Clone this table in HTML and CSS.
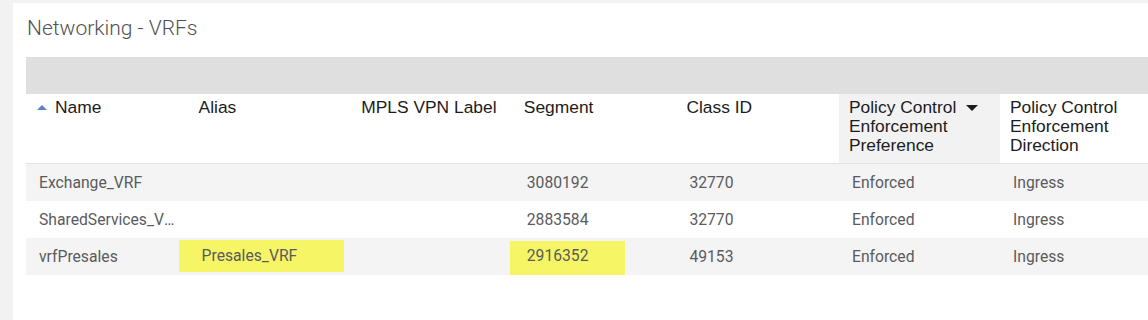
FILE: index.html
```html
<!DOCTYPE html>
<html>
<head>
<meta charset="utf-8">
<link rel="stylesheet" href="styles.css">
</head>
<body>
<div class="panel">
  <h1 class="title">Networking - VRFs</h1>
  <div class="toolbar"></div>
  <table class="grid">
    <colgroup>
      <col class="c"><col class="c"><col class="c"><col class="c"><col class="c"><col class="c-sorted"><col class="c">
    </colgroup>
    <thead>
      <tr>
        <th><span class="sort-up"></span>Name</th>
        <th>Alias</th>
        <th>MPLS VPN Label</th>
        <th>Segment</th>
        <th>Class ID</th>
        <th class="sorted">Policy Control<span class="sort-down"></span> Enforcement Preference</th>
        <th>Policy Control Enforcement Direction</th>
      </tr>
    </thead>
    <tbody>
      <tr class="odd">
        <td>Exchange_VRF</td>
        <td></td>
        <td></td>
        <td>3080192</td>
        <td>32770</td>
        <td>Enforced</td>
        <td>Ingress</td>
      </tr>
      <tr>
        <td>SharedServices_VRF</td>
        <td></td>
        <td></td>
        <td>2883584</td>
        <td>32770</td>
        <td>Enforced</td>
        <td>Ingress</td>
      </tr>
      <tr class="odd">
        <td>vrfPresales</td>
        <td><span class="mark mark-alias">Presales_VRF</span></td>
        <td></td>
        <td><span class="mark mark-seg">2916352</span></td>
        <td>49153</td>
        <td>Enforced</td>
        <td>Ingress</td>
      </tr>
    </tbody>
  </table>
</div>
</body>
</html>
```
FILE: styles.css
```css
html, body {
  margin: 0;
  padding: 0;
}
body {
  background: #f2f2f2;
  overflow: hidden;
  width: 1148px;
  height: 320px;
}
.panel {
  margin: 3px 0 0 13px;
  height: 317px;
  background: #ffffff;
  padding-left: 13px;
  overflow: hidden;
  box-sizing: border-box;
}
.title {
  margin: 0;
  padding-top: 13px;
  height: 41px;
  box-sizing: border-box;
  font-family: Roboto, "Liberation Sans", sans-serif;
  font-weight: 300;
  font-size: 21px;
  line-height: 24px;
  color: #4f5153;
  padding-left: 1px;
}
.toolbar {
  margin-top: 13px;
  height: 37px;
  background: #dfdfdf;
  width: 1200px;
}
.grid {
  border-collapse: collapse;
  table-layout: fixed;
  width: 1136px;
}
.grid col.c {
  width: 162.6px;
}
.grid col.c-sorted {
  width: 161px;
}
.grid th {
  font-family: "Liberation Sans", Arial, sans-serif;
  font-weight: normal;
  font-size: 17.4px;
  line-height: 19px;
  color: #1c1c1c;
  text-align: left;
  vertical-align: top;
  padding: 4px 8px 8px 10px;
  height: 57px;
  border-bottom: 1px solid #e2e2e2;
}
.grid th.sorted {
  background: #f2f2f2;
}
.sort-up {
  display: inline-block;
  width: 0;
  height: 0;
  border-left: 5px solid transparent;
  border-right: 5px solid transparent;
  border-bottom: 5px solid #5b86c6;
  margin: 0 8px 0 1px;
  vertical-align: 3px;
}
.sort-down {
  display: inline-block;
  width: 0;
  height: 0;
  border-left: 6px solid transparent;
  border-right: 6px solid transparent;
  border-top: 6px solid #1c1c1c;
  margin-left: 10px;
  vertical-align: 2px;
}
.grid td {
  font-family: Roboto, "Liberation Sans", sans-serif;
  font-size: 15.7px;
  color: #5a5b5e;
  height: 37px;
  padding: 0 13px;
  box-sizing: border-box;
  vertical-align: middle;
  white-space: nowrap;
  overflow: visible;
  text-overflow: ellipsis;
}
.grid td:first-child {
  overflow: hidden;
}
.grid tr.odd td {
  background: #f4f4f4;
}
.mark {
  display: inline-block;
  background: #f5f566;
  box-sizing: border-box;
  vertical-align: middle;
}
.mark-alias {
  width: 165px;
  height: 32px;
  line-height: 32px;
  margin-left: -23px;
  padding-left: 23px;
}
.mark-seg {
  width: 115px;
  height: 34px;
  line-height: 30px;
  padding-bottom: 4px;
  margin-left: -17px;
  padding-left: 17px;
  margin-top: 3px;
}
```
